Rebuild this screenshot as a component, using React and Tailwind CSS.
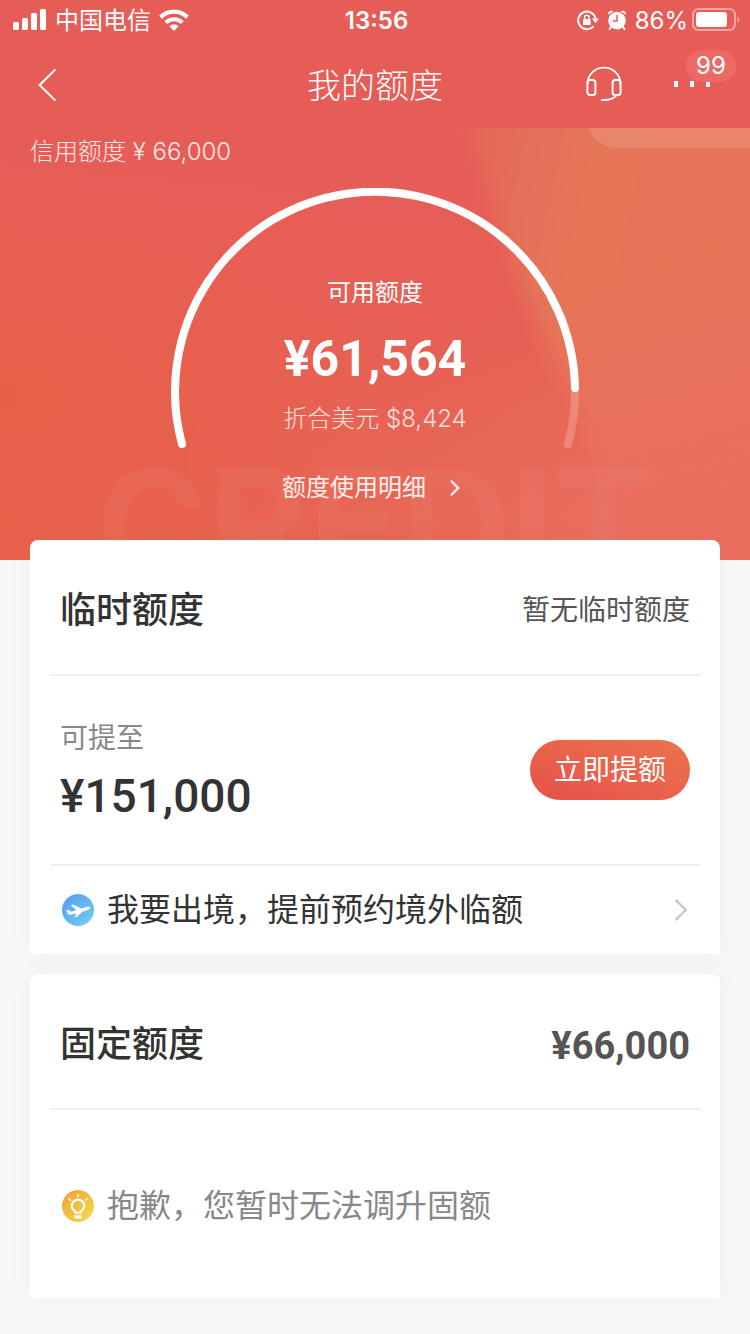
function SignalIcon() {
  return (
    <svg viewBox="0 0 34 22" className="h-[22px] w-[34px]" fill="currentColor" aria-hidden="true">
      <rect x="0" y="13" width="6" height="8" rx="1.5" />
      <rect x="9" y="9" width="6" height="12" rx="1.5" />
      <rect x="18" y="4" width="6" height="17" rx="1.5" />
      <rect x="27" y="0" width="6" height="21" rx="1.5" />
    </svg>
  );
}

function WifiIcon() {
  return (
    <svg viewBox="0 0 30 22" className="h-[22px] w-[30px]" fill="none" stroke="currentColor" aria-hidden="true">
      <path d="M1.6 8.2A19 19 0 0 1 28.4 8.2" strokeWidth="4.4" />
      <path d="M6.8 13.6A11.6 11.6 0 0 1 23.2 13.6" strokeWidth="4" />
      <path d="M15 22L10.4 17.2A6.5 6.5 0 0 1 19.6 17.2Z" fill="currentColor" stroke="none" />
    </svg>
  );
}

function RotationLockIcon() {
  return (
    <svg viewBox="0 0 22 22" className="h-[22px] w-[22px]" fill="none" stroke="currentColor" aria-hidden="true">
      <path d="M16.6 17.2A8.8 8.8 0 1 1 18.6 9.6" strokeWidth="1.9" />
      <path d="M15 9.6H22L18.6 14.2Z" fill="currentColor" stroke="none" />
      <rect x="6" y="10" width="7.6" height="6" rx="0.8" fill="currentColor" stroke="none" />
      <path d="M7.6 10.4V8.4a2.2 2.2 0 0 1 4.4 0V10.4" strokeWidth="1.5" />
    </svg>
  );
}

function AlarmIcon() {
  return (
    <svg viewBox="0 0 20 20" className="h-5 w-5" aria-hidden="true">
      <circle cx="10" cy="10.6" r="8.8" fill="currentColor" />
      <path d="M1 4.8C0.6 1.6 3.4 -0.4 6.6 1.2ZM19 4.8C19.4 1.6 16.6 -0.4 13.4 1.2Z" fill="currentColor" />
      <path d="M4 17L2.6 19M16 17L17.4 19" stroke="currentColor" strokeWidth="2" strokeLinecap="round" />
      <path d="M10 5V11H5.6" fill="none" stroke="#e65d57" strokeWidth="1.5" />
    </svg>
  );
}

function BatteryIcon() {
  return (
    <svg viewBox="0 0 48 24" className="h-6 w-12" fill="none" aria-hidden="true">
      <rect x="1" y="1" width="42" height="21" rx="5.5" stroke="#fff" strokeOpacity="0.45" strokeWidth="2" />
      <rect x="4" y="4" width="31" height="15" rx="3" fill="#fff" />
      <path d="M45.5 8.5C48 9.5 48 13.5 45.5 14.5Z" fill="#fff" fillOpacity="0.45" />
    </svg>
  );
}

function HeadsetIcon() {
  return (
    <svg viewBox="0 0 36 36" className="h-9 w-9" fill="none" stroke="currentColor" strokeWidth="1.9" strokeLinecap="round" aria-hidden="true">
      <path d="M1.8 18V17.4C1.8 8.4 8.8 1.6 18 1.6S34.2 8.4 34.2 17.4V18" />
      <rect x="1.4" y="14" width="8" height="15" rx="2.6" />
      <rect x="26.6" y="14" width="8" height="15" rx="2.6" />
      <path d="M30.4 29.4C27.4 33 22.6 34.4 16 34" />
    </svg>
  );
}

function Chevron({ className }) {
  return (
    <svg viewBox="0 0 12 20" className={className} fill="none" stroke="currentColor" strokeLinecap="square" aria-hidden="true">
      <path d="M2 2L10 10L2 18" />
    </svg>
  );
}

function PlaneIcon() {
  return (
    <svg viewBox="0 0 32 32" className="h-8 w-8" aria-hidden="true">
      <defs>
        <linearGradient id="plane" x1="0" y1="0" x2="1" y2="1">
          <stop offset="0" stopColor="#559de8" />
          <stop offset="1" stopColor="#75cdfb" />
        </linearGradient>
      </defs>
      <circle cx="16" cy="16" r="16" fill="url(#plane)" />
      <path
        d="M4.2 16.2L6 15.8L9.4 17.8L14.4 16.2L8.8 11.2L11 10.4L19.4 14.6L24.4 13C26.4 12.5 28 12.8 28.2 13.6C28.4 14.6 26.8 15.5 25 16.2L20.4 17.8L15 22.8L12.2 23.2L14.8 19.4L8.8 20.6C7.4 20.8 6.4 20.4 5.8 19.4Z"
        fill="#fff"
      />
    </svg>
  );
}

function BulbIcon() {
  return (
    <svg viewBox="0 0 32 32" className="h-8 w-8" fill="none" aria-hidden="true">
      <defs>
        <linearGradient id="bulb" x1="0" y1="0" x2="1" y2="1">
          <stop offset="0" stopColor="#eda136" />
          <stop offset="1" stopColor="#f8dd4c" />
        </linearGradient>
      </defs>
      <circle cx="16" cy="16" r="16" fill="url(#bulb)" />
      <path d="M13 22.6V21.2A6.2 6.2 0 1 1 19 21.2V22.6Z" stroke="#fff" strokeWidth="2.2" strokeLinejoin="round" />
      <path d="M12.4 25.2H19.6V27.2C19.6 28 19 28.4 18.4 28.4H13.6C13 28.4 12.4 28 12.4 27.2Z" fill="#fff" />
      <path d="M16 4.8V6.4M7 8.8L8.4 10.2M25 8.8L23.6 10.2" stroke="#fff" strokeWidth="1.6" strokeLinecap="round" />
    </svg>
  );
}

function HeroBackdrop() {
  return (
    <div className="absolute inset-0 overflow-hidden" aria-hidden="true">
      <svg viewBox="0 0 750 432" preserveAspectRatio="none" className="h-full w-full">
        <defs>
          <linearGradient id="base" x1="0.5" y1="0.1" x2="0.35" y2="1">
            <stop offset="0" stopColor="#e65d58" />
            <stop offset="1" stopColor="#e8644f" />
          </linearGradient>
          <radialGradient id="left" cx="0" cy="0.62" r="0.5">
            <stop offset="0" stopColor="#e85f49" />
            <stop offset="1" stopColor="#e85f49" stopOpacity="0" />
          </radialGradient>
          <linearGradient id="orange" gradientUnits="userSpaceOnUse" x1="470" y1="60" x2="750" y2="120">
            <stop offset="0" stopColor="#e56a59" />
            <stop offset="0.4" stopColor="#e57659" />
            <stop offset="1" stopColor="#e57459" />
          </linearGradient>
          <linearGradient id="bottom" gradientUnits="userSpaceOnUse" x1="560" y1="160" x2="640" y2="432">
            <stop offset="0" stopColor="#ea6e5e" stopOpacity="0" />
            <stop offset="0.85" stopColor="#ea6e5e" />
          </linearGradient>
          <linearGradient id="fade" gradientUnits="userSpaceOnUse" x1="180" y1="0" x2="600" y2="0">
            <stop offset="0" stopColor="#fff" stopOpacity="0" />
            <stop offset="1" stopColor="#fff" />
          </linearGradient>
          <mask id="fadeMask">
            <rect width="750" height="432" fill="url(#fade)" />
          </mask>
          <filter id="soft" x="-20%" y="-20%" width="140%" height="140%">
            <feGaussianBlur stdDeviation="8" />
          </filter>
        </defs>
        <rect width="750" height="432" fill="url(#base)" />
        <rect width="750" height="432" fill="url(#left)" />
        <path d="M468 -30C485 70 515 150 550 225C590 310 610 360 620 470H800V-30Z" fill="url(#orange)" filter="url(#soft)" />
        <rect width="750" height="432" fill="url(#bottom)" mask="url(#fadeMask)" />
      </svg>
      <div className="absolute -top-10 right-0 h-[60px] w-[163px] rounded-bl-[30px] bg-white/12" />
      <p className="absolute inset-x-0 top-80 text-center text-[152px] leading-none font-bold text-white/4">CREDIT</p>
    </div>
  );
}

function Card({ children }) {
  return <section className="rounded-t-lg bg-white px-5 shadow-[0_0_30px_rgba(0,0,0,0.03)]">{children}</section>;
}

export default function App() {
  return (
    <div className="min-h-screen bg-[#f7f7f7] pb-9 font-['Inter','Noto_Sans_CJK_SC',sans-serif] text-[#333]">
      <header className="bg-[#e65d57] text-white">
        {/* Status bar */}
        <div className="grid h-10 grid-cols-3 items-center pr-2.5 pl-[13px] text-2xl">
          <div className="flex items-center gap-2">
            <SignalIcon />
            <span className="pt-0.5 whitespace-nowrap">中国电信</span>
            <WifiIcon />
          </div>
          <span className="pt-0.5 text-center font-semibold">13:56</span>
          <div className="flex items-center justify-end gap-2">
            <RotationLockIcon />
            <AlarmIcon />
            <div className="flex items-center gap-1">
              <span className="pt-0.5">86%</span>
              <BatteryIcon />
            </div>
          </div>
        </div>

        {/* Title bar */}
        <nav className="grid h-22 grid-cols-3 items-center px-8">
          <button type="button" aria-label="返回" className="w-fit pt-0.5 pl-1">
            <svg viewBox="0 0 22 36" className="h-9 w-[22px]" fill="none" stroke="currentColor" strokeWidth="2" aria-hidden="true">
              <path d="M19.4 2.4L3.6 18L19.4 33.6" />
            </svg>
          </button>
          <h1 className="pt-0.5 text-center text-[34px] font-light">我的额度</h1>
          <div className="flex items-center justify-end gap-[52px]">
            <button type="button" aria-label="客服">
              <HeadsetIcon />
            </button>
            <button type="button" aria-label="更多" className="relative flex h-9 w-11 items-center gap-3">
              <span className="h-1.5 w-1 bg-white" />
              <span className="h-1.5 w-1 bg-white" />
              <span className="h-1.5 w-1 bg-white" />
              <span className="absolute -top-4 left-3 grid h-8 w-[50px] place-items-center rounded-full bg-[#ec6a66] text-2xl">99</span>
            </button>
          </div>
        </nav>
      </header>

      {/* Available credit */}
      <section className="relative h-[432px] text-white">
        <HeroBackdrop />
        <div className="relative">
          <p className="px-[30px] pt-2 text-2xl leading-8 font-light text-white/85">信用额度 ¥ 66,000</p>

          <div className="relative mx-auto mt-5 flex h-[264px] w-[408px] flex-col items-center pt-[87px]">
            <svg viewBox="0 0 408 264" className="absolute inset-0 h-full w-full" fill="none" stroke="#fff" strokeWidth="8" strokeLinecap="round" aria-hidden="true">
              <path d="M404 204A200 200 0 0 1 397 256" strokeOpacity="0.2" />
              <path d="M11 256A200 200 0 1 1 404 200" />
            </svg>
            <p className="text-2xl leading-9">可用额度</p>
            <p className="mt-3 font-['Roboto',sans-serif] text-[50px] leading-[72px] font-bold">¥61,564</p>
            <p className="mt-1.5 text-2xl leading-9 font-light text-white/80">折合美元 $8,424</p>
          </div>

          <a href="#usage" className="mx-auto mt-[18px] flex w-fit items-center gap-6 pr-2 text-2xl leading-9 text-white/90">
            额度使用明细
            <Chevron className="h-4 w-2.5 stroke-3" />
          </a>
        </div>
      </section>

      <main className="relative -mt-5 flex flex-col gap-5 px-[30px]">
        {/* Temporary limit */}
        <Card>
          <div className="flex h-[134px] items-center justify-between px-2.5 pt-1.5">
            <h2 className="text-4xl font-medium">临时额度</h2>
            <p className="text-[28px] text-[#555]">暂无临时额度</p>
          </div>
          <div className="flex h-48 items-center justify-between border-y-2 border-[#eee] px-2.5">
            <div className="pt-1">
              <p className="text-[28px] leading-10 text-[#888]">可提至</p>
              <p className="mt-2 font-['Roboto',sans-serif] text-[46px] leading-[60px] font-medium">¥151,000</p>
            </div>
            <button type="button" className="h-[60px] w-40 rounded-full bg-linear-to-tr from-[#e6504b] to-[#ec734c] text-[28px] text-white">
              立即提额
            </button>
          </div>
          <a href="#abroad" className="flex h-[88px] items-center gap-[13px] px-3 text-[32px]">
            <PlaneIcon />
            <span className="flex-1">我要出境，提前预约境外临额</span>
            <Chevron className="h-6 w-3.5 stroke-2 text-[#c8c8c8]" />
          </a>
        </Card>

        {/* Fixed limit */}
        <Card>
          <div className="flex h-[136px] items-center justify-between border-b-2 border-[#eee] px-2.5 pt-1.5">
            <h2 className="text-4xl font-medium">固定额度</h2>
            <p className="pt-1 font-['Roboto',sans-serif] text-[38px] font-bold text-[#555]">¥66,000</p>
          </div>
          <div className="flex h-[188px] items-center gap-[13px] px-3 pt-1 text-[32px] text-[#888]">
            <BulbIcon />
            <p>抱歉，您暂时无法调升固额</p>
          </div>
        </Card>
      </main>
    </div>
  );
}
